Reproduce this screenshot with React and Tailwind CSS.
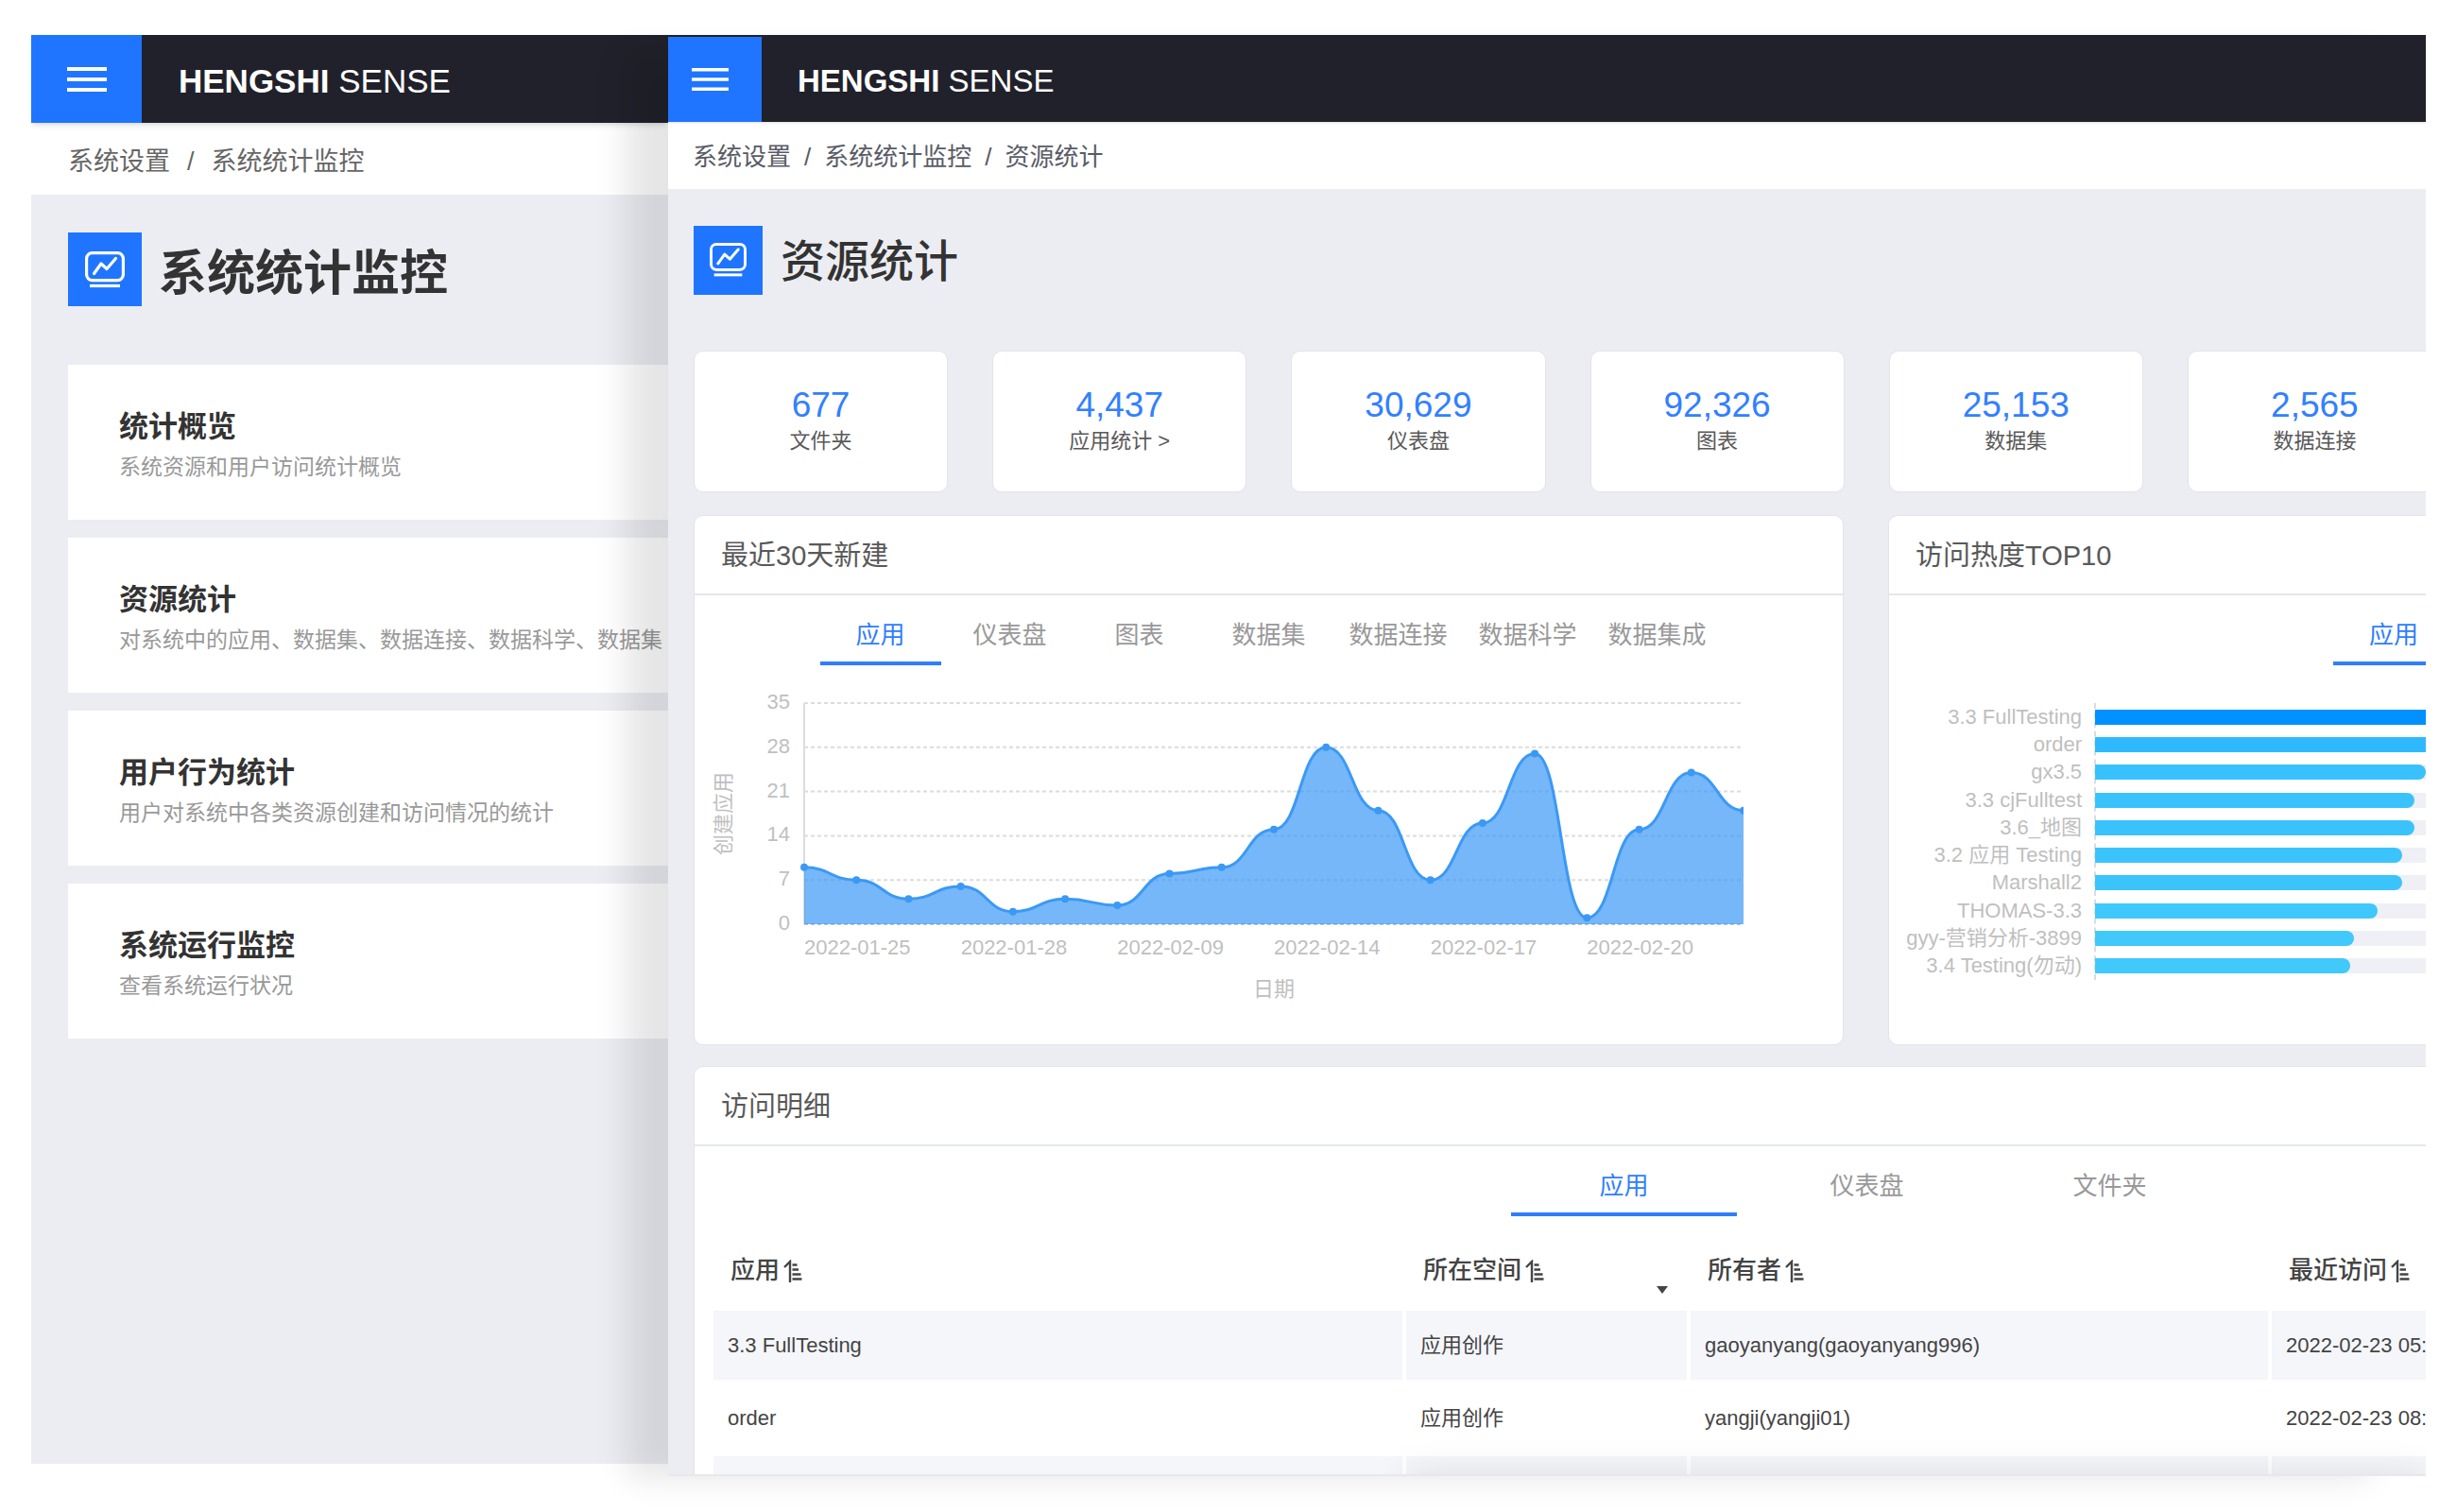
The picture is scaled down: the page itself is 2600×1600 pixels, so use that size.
import React from 'react';
import clsx from 'clsx';

const settings = [
    { title: '统计概览', desc: '系统资源和用户访问统计概览' },
    { title: '资源统计', desc: '对系统中的应用、数据集、数据连接、数据科学、数据集' },
    { title: '用户行为统计', desc: '用户对系统中各类资源创建和访问情况的统计' },
    { title: '系统运行监控', desc: '查看系统运行状况' },
];

const stats = [
    { value: '677', label: '文件夹' },
    { value: '4,437', label: '应用统计 >', link: true },
    { value: '30,629', label: '仪表盘' },
    { value: '92,326', label: '图表' },
    { value: '25,153', label: '数据集' },
    { value: '2,565', label: '数据连接' },
];

const created = [9, 7, 4, 6, 2, 4, 3, 8, 9, 15, 28, 18, 7, 16, 27, 1, 15, 24, 18];
const dates = ['2022-01-25', '2022-01-28', '2022-02-09', '2022-02-14', '2022-02-17', '2022-02-20'];

const hot = [
    { name: '3.3 FullTesting', width: '100%', color: 'bg-[#0091ff]' },
    { name: 'order', width: '100%', color: 'bg-[#2fb9fd]' },
    { name: 'gx3.5', width: '100%', color: 'bg-[#38c1fc] rounded-r-full' },
    { name: '3.3 cjFulltest', width: '96.7%', color: 'bg-[#3ac3fb] rounded-r-full' },
    { name: '3.6_地图', width: '96.5%', color: 'bg-[#3ac3fb] rounded-r-full' },
    { name: '3.2 应用 Testing', width: '92.8%', color: 'bg-[#3bc4fb] rounded-r-full' },
    { name: 'Marshall2', width: '92.8%', color: 'bg-[#3bc4fb] rounded-r-full' },
    { name: 'THOMAS-3.3', width: '85.3%', color: 'bg-[#3ec8fb] rounded-r-full' },
    { name: 'gyy-营销分析-3899', width: '78.4%', color: 'bg-[#40c9fa] rounded-r-full' },
    { name: '3.4 Testing(勿动)', width: '77.1%', color: 'bg-[#40c9fa] rounded-r-full' },
];

const visits = [
    ['3.3 FullTesting', '应用创作', 'gaoyanyang(gaoyanyang996)', '2022-02-23 05:'],
    ['order', '应用创作', 'yangji(yangji01)', '2022-02-23 08:'],
    ['', '', '', ''],
];

const MenuIcon = ({ className }) => (
    <svg viewBox="0 0 42 26" className={className} fill="none" stroke="white" strokeWidth="3.8">
        <path d="M0 2h42M0 13h42M0 24h42" />
    </svg>
);

const MonitorIcon = ({ className }) => (
    <svg viewBox="0 0 42 39" className={className} fill="none" stroke="white" strokeWidth="3.2" strokeLinecap="round" strokeLinejoin="round">
        <rect x="1.6" y="1.6" width="38.8" height="29" rx="6" />
        <path d="M9.5 23.5 17 13l6 5.5 9.5-11" />
        <path d="M5 36.5h32" strokeLinecap="butt" />
    </svg>
);

const SortIcon = () => (
    <svg viewBox="0 0 20 24" className="h-6 w-5 shrink-0" fill="none" stroke="#444" strokeWidth="2.4">
        <path d="M7 24V2L1 8" />
        <path d="M9.5 5.5h5M9.5 10.5h6.5M9.5 15.5h9M9.5 20.5h10" />
    </svg>
);

const Tabs = ({ items, className, tabClass }) => (
    <div role="tablist" className={clsx('mt-[22px] flex', className)}>
        {items.map((item, index) => (
            <button
                key={item}
                role="tab"
                aria-selected={index === 0}
                className={clsx(
                    'shrink-0 border-b-4 pb-2 text-[26px] leading-[40px]',
                    tabClass,
                    index === 0 ? 'border-[#2f7dff] text-[#2f7dff]' : 'border-transparent text-[#999]'
                )}
            >
                {item}
            </button>
        ))}
    </div>
);

const Panel = ({ title, className, children }) => (
    <section className={clsx('flex flex-col overflow-hidden border border-[#e2e4e9] bg-white', className)}>
        <h2 className="flex h-[84px] shrink-0 items-center border-b-2 border-[#e4e7ec] pt-1 pl-7 text-[29px] text-[#595959]">
            {title}
        </h2>
        {children}
    </section>
);

const AreaChart = () => {
    const left = 116;
    const right = 1110;
    const bottom = 274;
    const unit = 234 / 35;
    const step = (right - left) / (created.length - 1);
    const points = created.map((v, i) => [left + i * step, bottom - v * unit]);
    const line = points
        .map(([x, y], i) => {
            if (i === 0) return `M${x} ${y}`;
            const [px, py] = points[i - 1];
            return `C${px + step / 2} ${py} ${x - step / 2} ${y} ${x} ${y}`;
        })
        .join('');

    return (
        <svg viewBox="0 0 1215 401" className="w-full text-[22px]" fill="#bfbfbf">
            <defs>
                <clipPath id="plot">
                    <rect x={left - 5} y="0" width={right - left + 5} height={bottom + 3} />
                </clipPath>
            </defs>
            {[0, 7, 14, 21, 28, 35].map((v) => (
                <g key={v}>
                    <path
                        d={`M${left} ${bottom - v * unit}H${right}`}
                        stroke={v === 0 ? '#c4c4c4' : '#dcdcdc'}
                        strokeWidth="2"
                        strokeDasharray="4 3"
                    />
                    <text x="101" y={bottom - v * unit + 6} textAnchor="end">{v}</text>
                </g>
            ))}
            <path d={`M${left} 40V${bottom}`} stroke="#dcdcdc" strokeWidth="2" />
            <g clipPath="url(#plot)">
                <path d={`${line}V${bottom}H${left}Z`} fill="#3b99f5" fillOpacity="0.7" />
                <path d={line} fill="none" stroke="#3b99f5" strokeWidth="3" />
                {points.map(([x, y]) => (
                    <circle key={x} cx={x} cy={y} r="4" fill="#3b99f5" />
                ))}
            </g>
            {dates.map((d, i) => (
                <text key={d} x={left + i * 3 * step} y="306">{d}</text>
            ))}
            <text x="613" y="350" textAnchor="middle">日期</text>
            <text x="38" y="157" textAnchor="middle" transform="rotate(-90 38 157)">创建应用</text>
        </svg>
    );
};

const SystemPage = () => (
    <aside className="mb-[13px] flex w-[674px] shrink-0 flex-col overflow-hidden bg-[#ecedf2]">
        <header className="relative flex h-[93px] shrink-0 bg-[#21212b] shadow-md">
            <button aria-label="菜单" className="flex w-[117px] items-center justify-center bg-[#1f75ff]">
                <MenuIcon className="w-[42px]" />
            </button>
            <div className="flex items-center pt-[6px] pl-[39px] text-[35px] text-white">
                <span><b>HENGSHI</b> SENSE</span>
            </div>
        </header>
        <nav className="flex h-[76px] shrink-0 items-center bg-white pt-[6px] pl-[39px] text-[27px] text-[#666]">
            <a href="#settings">系统设置</a>
            <span className="mx-[18px]">/</span>
            <a href="#monitor">系统统计监控</a>
        </nav>
        <div className="flex flex-col pt-10 pl-[39px]">
            <div className="flex items-center gap-[18px]">
                <div className="flex size-[78px] items-center justify-center bg-[#1f75ff]">
                    <MonitorIcon className="w-[42px]" />
                </div>
                <h1 className="pt-[10px] text-[51px] leading-[60px] font-bold text-[#333]">系统统计监控</h1>
            </div>
            <div className="mt-[62px] flex flex-col gap-[19px]">
                {settings.map((item) => (
                    <a key={item.title} href="#detail" className="h-[164px] bg-white pt-11 pl-[54px] whitespace-nowrap">
                        <h3 className="text-[31px] leading-[44px] font-bold text-[#333]">{item.title}</h3>
                        <p className="text-[23px] leading-[40px] text-[#999]">{item.desc}</p>
                    </a>
                ))}
            </div>
        </div>
    </aside>
);

const VisitTable = () => (
    <table className="mt-[13px] ml-4 w-[calc(100%-12px)] table-fixed border-separate border-spacing-1 text-left text-[#444]">
        <thead>
            <tr className="h-[79px] text-[26px]">
                {['应用', '所在空间', '所有者', '最近访问'].map((name, index) => (
                    <th
                        key={name}
                        className={clsx(
                            'p-0 pl-[18px] font-medium whitespace-nowrap',
                            index === 0 && 'w-[729px]',
                            index === 1 && 'w-[297px]',
                            index === 2 && 'w-[611px]'
                        )}
                    >
                        <div className="flex items-center gap-1 pt-[2px]">
                            {name}
                            <SortIcon />
                            {index === 1 && (
                                <svg viewBox="0 0 12 8" className="mt-10 mr-5 ml-auto w-3" fill="#444">
                                    <path d="M0 0h12L6 8z" />
                                </svg>
                            )}
                        </div>
                    </th>
                ))}
            </tr>
        </thead>
        <tbody>
            {visits.map((row, index) => (
                <tr key={index} className={clsx('h-[73px] text-[22px]', index % 2 === 0 && 'bg-[#f5f6fa]')}>
                    {row.map((cell, i) => (
                        <td key={i} className="overflow-hidden p-0 pl-[15px] whitespace-nowrap">{cell}</td>
                    ))}
                </tr>
            ))}
        </tbody>
    </table>
);

const ResourcePage = () => (
    <main className="relative z-10 min-w-0 flex-1 shadow-[-52px_10px_32px_-8px_rgba(0,0,0,0.1)]">
        <div className="relative flex h-full flex-col overflow-hidden border-b-2 border-[#e6e8ec] bg-[#ecedf2]">
            <header className="relative flex h-[92px] shrink-0 bg-[#21212b] shadow-sm">
                <button aria-label="菜单" className="mt-[2px] flex w-[99px] items-center bg-[#1f75ff] pl-[25px]">
                    <MenuIcon className="w-[39px]" />
                </button>
                <div className="flex items-center pt-[6px] pl-[38px] text-[33px] text-white">
                    <span><b>HENGSHI</b> SENSE</span>
                </div>
            </header>
            <nav className="flex h-[71px] shrink-0 items-center bg-white pt-1 pl-[26px] text-[26px] text-[#595b66]">
                <a href="#settings">系统设置</a>
                <span className="mx-[14px]">/</span>
                <a href="#monitor">系统统计监控</a>
                <span className="mx-[14px]">/</span>
                <a href="#resource">资源统计</a>
            </nav>
            <div className="flex min-h-0 flex-1 flex-col pt-[39px] pl-[27px]">
                <div className="flex items-center gap-[19px]">
                    <div className="flex size-[73px] items-center justify-center bg-[#1f75ff]">
                        <MonitorIcon className="w-[39px]" />
                    </div>
                    <h1 className="pt-[2px] text-[47px] leading-[60px] font-medium text-[#333]">资源统计</h1>
                </div>
                <div className="mt-[59px] grid shrink-0 grid-cols-[repeat(5,269fr)_252fr] gap-[47px]">
                    {stats.map((s, index) => (
                        <div
                            key={s.label}
                            className={clsx(
                                'h-[150px] border border-[#e2e4e9] bg-white pt-[35px] text-center',
                                index === 5 ? 'rounded-l-[10px] border-r-0 pl-4' : 'rounded-[10px]'
                            )}
                        >
                            <div className="text-[37px] leading-[44px] text-[#3280ff]">{s.value}</div>
                            <div className="text-[22px] leading-[32px] text-[#595959]">
                                {s.link ? <a href="#apps">{s.label}</a> : s.label}
                            </div>
                        </div>
                    ))}
                </div>
                <div className="mt-6 grid shrink-0 grid-cols-[1217fr_569fr] gap-[47px]">
                    <Panel title="最近30天新建" className="rounded-[10px]">
                        <Tabs
                            items={['应用', '仪表盘', '图表', '数据集', '数据连接', '数据科学', '数据集成']}
                            className="justify-center gap-[9px]"
                            tabClass="w-[128px]"
                        />
                        <AreaChart />
                    </Panel>
                    <Panel title="访问热度TOP10" className="rounded-l-[10px] border-r-0">
                        <Tabs items={['应用']} className="pl-[470px]" tabClass="w-[128px]" />
                        <div className="mt-10 flex h-[293px] text-[22px] text-[#bfbfbf]">
                            <div className="flex w-[204px] shrink-0 flex-col text-right whitespace-nowrap">
                                {hot.map((h) => (
                                    <span key={h.name} className="flex flex-1 items-center justify-end leading-none">{h.name}</span>
                                ))}
                            </div>
                            <div className="ml-[13px] flex flex-1 flex-col border-l-2 border-dashed border-[#dcdcdc]">
                                {hot.map((h) => (
                                    <div key={h.name} className="-ml-px flex flex-1 items-center">
                                        <div className="h-4 w-full bg-[#eff0f5]">
                                            <div className={clsx('h-4', h.color)} style={{ width: h.width }} />
                                        </div>
                                    </div>
                                ))}
                            </div>
                        </div>
                    </Panel>
                </div>
                <Panel title="访问明细" className="mt-[22px] min-h-0 flex-1 rounded-tl-[10px] border-r-0 border-b-0">
                    <Tabs items={['应用', '仪表盘', '文件夹']} className="gap-[18px] pl-[864px]" tabClass="w-[239px]" />
                    <VisitTable />
                </Panel>
            </div>
            <div className="absolute right-0 -bottom-10 left-[780px] h-10 shadow-[0_0_40px_rgba(0,0,0,0.1)]" />
        </div>
    </main>
);

const App = () => (
    <div
        lang="zh-CN"
        className="flex h-screen bg-white px-[33px] pt-[37px] pb-[38px] font-['Liberation_Sans','Noto_Sans_CJK_SC',sans-serif]"
    >
        <SystemPage />
        <ResourcePage />
    </div>
);

export default App;
